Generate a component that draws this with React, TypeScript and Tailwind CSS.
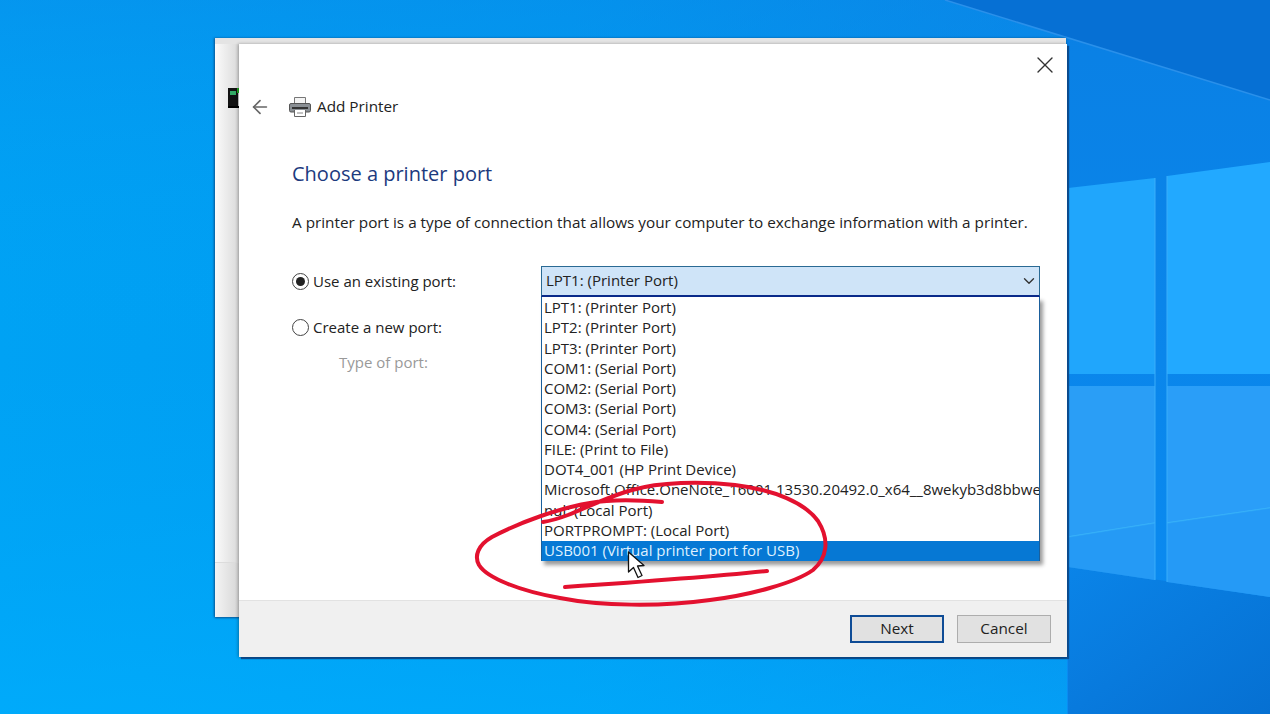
import { X, ArrowLeft, ChevronDown } from "lucide-react";

const ports = [
  "LPT1: (Printer Port)",
  "LPT2: (Printer Port)",
  "LPT3: (Printer Port)",
  "COM1: (Serial Port)",
  "COM2: (Serial Port)",
  "COM3: (Serial Port)",
  "COM4: (Serial Port)",
  "FILE: (Print to File)",
  "DOT4_001 (HP Print Device)",
  "Microsoft.Office.OneNote_16001.13530.20492.0_x64__8wekyb3d8bbwe",
  "nul: (Local Port)",
  "PORTPROMPT: (Local Port)",
  "USB001 (Virtual printer port for USB)",
];

function Wallpaper() {
  return (
    <svg className="absolute inset-0" width="1270" height="714" viewBox="0 0 1270 714">
      <defs>
        <linearGradient id="bg" x1="0" y1="0" x2="1" y2="0">
          <stop offset="0" stopColor="#00a2f4" />
          <stop offset="0.45" stopColor="#009af0" />
          <stop offset="0.85" stopColor="#0a84e6" />
          <stop offset="1" stopColor="#0a78dc" />
        </linearGradient>
        <linearGradient id="lift" x1="0" y1="0" x2="0" y2="1">
          <stop offset="0" stopColor="#0a88e8" stopOpacity="0.45" />
          <stop offset="0.5" stopColor="#00a8f8" stopOpacity="0" />
          <stop offset="1" stopColor="#00b0ff" stopOpacity="0.6" />
        </linearGradient>
        <linearGradient id="sky" x1="0" y1="0" x2="0" y2="1">
          <stop offset="0" stopColor="#0a80e4" />
          <stop offset="1" stopColor="#0a8cf2" />
        </linearGradient>
        <linearGradient id="floor" x1="0" y1="0" x2="1" y2="1">
          <stop offset="0" stopColor="#0a84e8" />
          <stop offset="1" stopColor="#0670d2" />
        </linearGradient>
      </defs>
      <rect width="1270" height="714" fill="url(#bg)" />
      <rect width="1067" height="714" fill="url(#lift)" />

      {/* right side of the Windows 10 wallpaper */}
      <rect x="1067" width="203" height="714" fill="url(#sky)" />
      <polygon points="945,0 1270,100 1270,0" fill="#0670d4" />
      <line x1="945" y1="0" x2="1270" y2="100" stroke="#2a90ea" strokeWidth="1.5" />
      <polygon points="1068,566 1270,597 1270,714 1068,714" fill="url(#floor)" />

      <polygon points="1068,188 1155,178 1155,374 1068,374" fill="#20a6fc" />
      <polygon points="1167,176 1270,162 1270,374 1167,374" fill="#22a9ff" />
      <polygon points="1068,386 1155,386 1155,580 1068,567" fill="#2a9ef6" />
      <polygon points="1167,386 1270,386 1270,597 1167,582" fill="#2a9ef8" />
      <line x1="1068" y1="537" x2="1155" y2="523" stroke="#3ab4fa" strokeWidth="1.5" />
      <line x1="1167" y1="523" x2="1270" y2="508" stroke="#3ab4fa" strokeWidth="1.5" />
      <polygon points="1068,537 1155,523 1155,580 1068,567" fill="#2096f4" opacity="0.5" />
      <polygon points="1167,523 1270,508 1270,597 1167,582" fill="#2096f4" opacity="0.5" />
      <line x1="1155" y1="178" x2="1155" y2="580" stroke="#3aaefa" />
      <line x1="1167" y1="176" x2="1167" y2="582" stroke="#3aaefa" />
    </svg>
  );
}

function PrinterIcon() {
  return (
    <svg width="24" height="24" viewBox="0 0 24 24" fill="none">
      <path d="M6.5 9V2.5h11V9" fill="#f4f4f4" stroke="#777" />
      <rect x="1.5" y="8.5" width="21" height="8.5" rx="1.5" fill="#8a8f94" stroke="#555" />
      <rect x="4" y="12" width="16" height="2" fill="#333" />
      <path d="M6.5 15v6.5h11V15" fill="#fff" stroke="#666" />
      <path d="M9 18h6" stroke="#888" />
    </svg>
  );
}

function Radio({ checked }: { checked?: boolean }) {
  return (
    <span className="flex h-[17px] w-[17px] shrink-0 items-center justify-center rounded-full border-[1.5px] border-[#444] bg-white">
      {checked && <span className="h-[9px] w-[9px] rounded-full bg-[#222]" />}
    </span>
  );
}

function Annotation() {
  return (
    <svg className="absolute inset-0 pointer-events-none" width="1270" height="714" viewBox="0 0 1270 714" fill="none">
      <path
        d="M662 502 C640 500 612 499 590 503 C560 508 520 522 492 537 C478 545 474 556 479 565 C487 578 520 591 560 598 C600 606 660 607 710 600 C750 595 795 583 813 570 C827 558 830 540 818 521 C805 503 775 490 735 485 C700 481 660 482 632 490 C610 496 590 506 568 515 C560 518 550 521 543 522"
        stroke="#e3112f"
        strokeWidth="4"
        strokeLinecap="round"
      />
      <path d="M565 587 C625 583 700 578 767 571" stroke="#e3112f" strokeWidth="4" strokeLinecap="round" />
      <path
        d="M628.5 552 L628.5 572 L633.5 567.5 L638 577.5 L642 575.5 L637.5 566 L644 565.5 Z"
        fill="#fff"
        stroke="#111"
        strokeWidth="1.3"
        strokeLinejoin="round"
      />
    </svg>
  );
}

export default function App() {
  return (
    <div
      className="relative h-[714px] w-[1270px] overflow-hidden text-[15.3px] text-[#222]"
      style={{ fontFamily: '"Open Sans", "Noto Sans", sans-serif' }}
    >
      <Wallpaper />

      {/* window behind the dialog */}
      <div className="absolute left-[215px] top-[38px] flex h-[579px] w-[851px] flex-col bg-[#f7f7f7] shadow-[-1px_0_2px_#0a5f9f,0_1px_2px_#0a5f9f]">
        <div className="h-[6px] bg-[#e4e4e4]" />
        <div className="w-[24px] flex-1 bg-gradient-to-r from-[#fbfbfb] to-[#dadada] pl-[13px] pt-[44px]">
          <svg width="12" height="20" viewBox="0 0 12 20">
            <rect x="0" y="0" width="10" height="18" fill="#111" />
            <rect x="2" y="3" width="6" height="4" fill="#3a6" />
            <rect x="9" y="0" width="3" height="5" fill="#2a2" />
            <rect x="0" y="18" width="12" height="2" fill="#000" />
          </svg>
        </div>
        <div className="h-[55px] w-[24px] border-t border-[#dcdcdc] bg-gradient-to-r from-[#f4f4f4] to-[#d6d6d6]" />
      </div>

      {/* Add Printer dialog */}
      <div className="absolute left-[239px] top-[44px] flex h-[613px] w-[828px] flex-col bg-white shadow-[-1px_0_3px_rgba(0,0,0,0.3),2px_2px_1px_#0b4f94]">
        <div className="flex justify-end pr-[8px] pt-[7px]">
          <X className="h-[28px] w-[28px] text-[#333]" strokeWidth={1.2} />
        </div>

        <div className="mt-[15px] flex h-[26px] items-center pl-[10px]">
          <ArrowLeft className="h-[22px] w-[22px] text-[#666]" strokeWidth={1.8} />
          <span className="ml-[17px]">
            <PrinterIcon />
          </span>
          <span className="ml-[5px] leading-none">Add Printer</span>
        </div>

        <div className="flex-1 pl-[53px]">
          <h1 className="mt-[40px] text-[20px] leading-[28px] text-[#1c3a7e]">Choose a printer port</h1>
          <p className="mt-[23px] whitespace-nowrap leading-[22px]">
            A printer port is a type of connection that allows your computer to exchange information with a printer.
          </p>

          <div className="mt-[33px] flex items-start">
            <div className="w-[249px] text-[15px]">
              <label className="flex h-[30px] items-center gap-[4px]">
                <Radio checked />
                Use an existing port:
              </label>
              <label className="mt-[16px] flex h-[30px] items-center gap-[4px]">
                <Radio />
                Create a new port:
              </label>
              <div className="mt-[5px] pl-[47px] text-[15px] leading-[30px] text-[#999]">Type of port:</div>
            </div>

            <div className="w-[499px] text-[15px]">
              <div className="flex h-[31px] items-center justify-between border border-[#2a6a94] border-b-2 border-b-[#0a2a8a] bg-[#cfe4f8] pl-[4px] pr-[1px]">
                <span className="-mt-px">LPT1: (Printer Port)</span>
                <ChevronDown className="h-[18px] w-[18px] text-[#333]" strokeWidth={1.8} />
              </div>
              <ul className="h-[264px] overflow-hidden border-x border-[#1a5f9c] bg-white pt-px shadow-[3px_4px_4px_rgba(0,0,0,0.4)]">
                {ports.map((port, i) => (
                  <li
                    key={port}
                    className={
                      i === ports.length - 1
                        ? "h-[20.25px] whitespace-nowrap bg-[#0678d4] pl-[2px] leading-[19px] text-[#dff1ff]"
                        : "h-[20.25px] whitespace-nowrap pl-[2px] leading-[19px]"
                    }
                  >
                    {port}
                  </li>
                ))}
              </ul>
            </div>
          </div>
        </div>

        <div className="flex h-[57px] items-center justify-end gap-[13px] border-t border-[#e2e2e2] bg-[#f0f0f0] pr-[16px]">
          <button className="h-[28px] w-[94px] border-2 border-[#0f4c96] bg-[#e1e1e1] pb-[2px]">Next</button>
          <button className="h-[28px] w-[94px] border border-[#adadad] bg-[#e1e1e1] pb-[2px]">Cancel</button>
        </div>
      </div>

      <Annotation />
    </div>
  );
}
